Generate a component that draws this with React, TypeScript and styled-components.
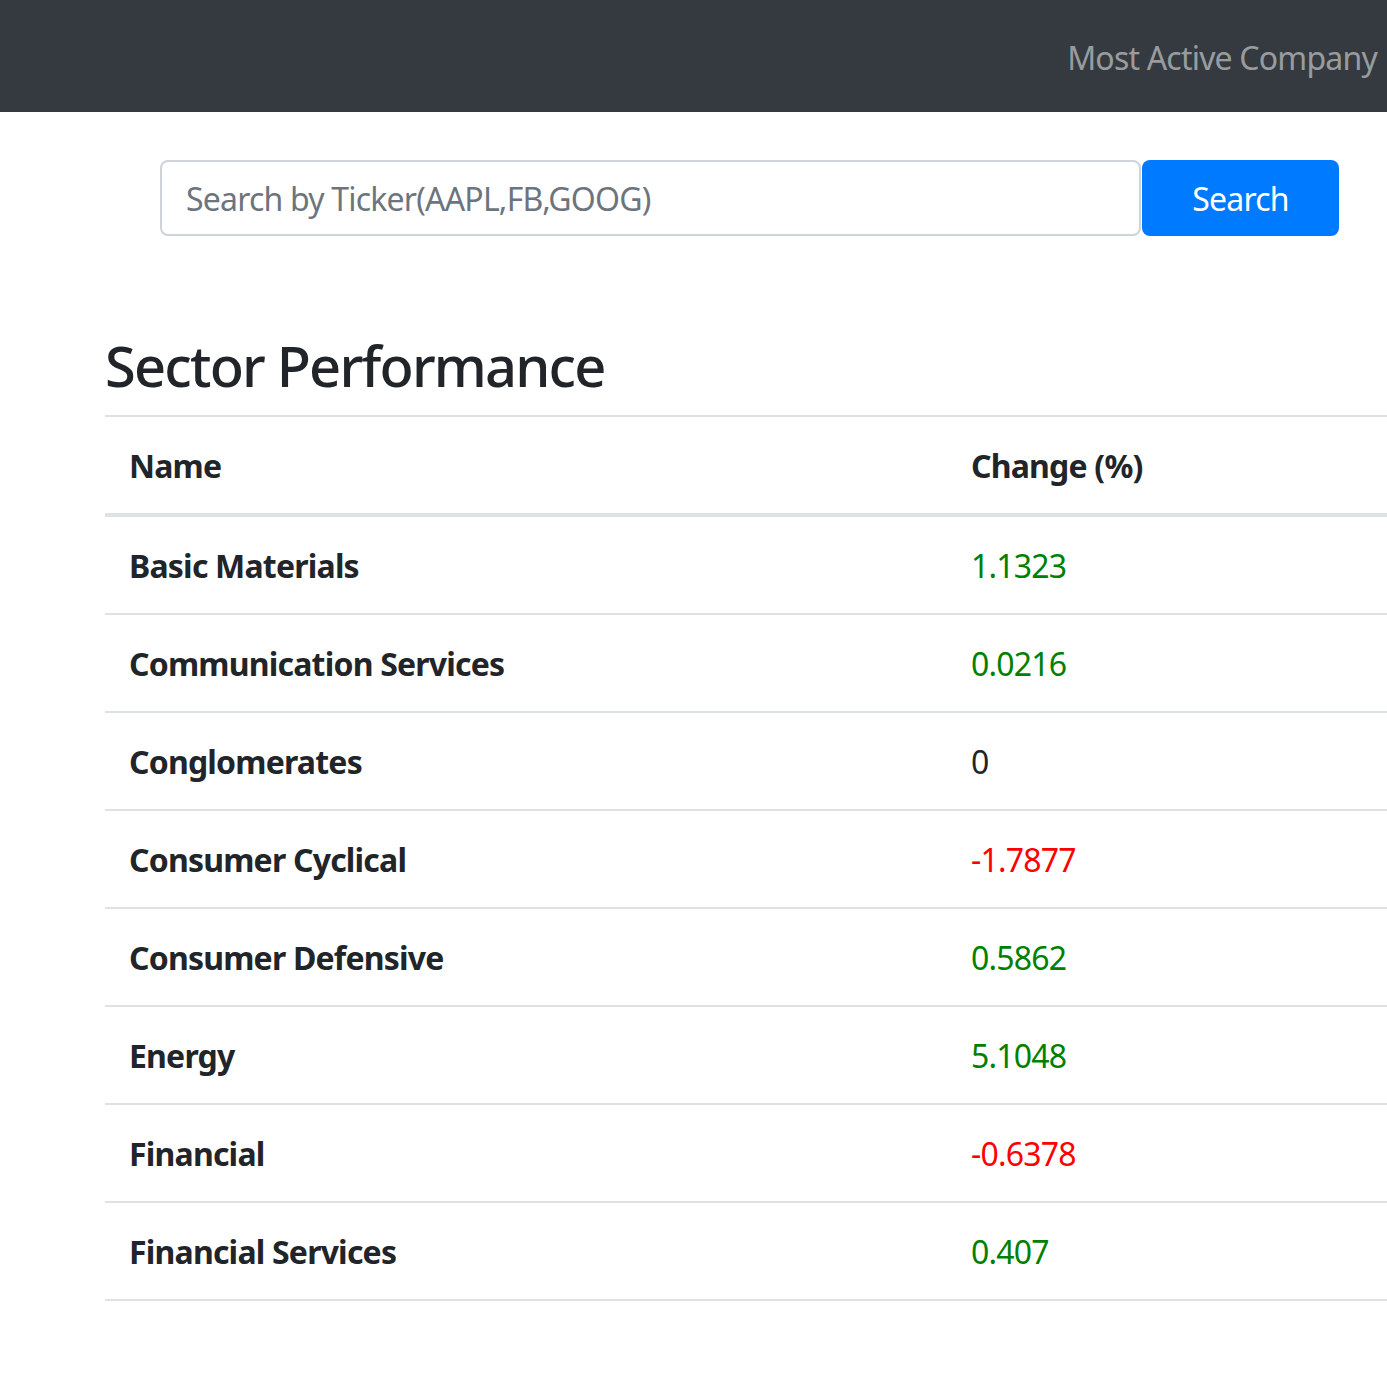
import React from 'react';
import styled, { createGlobalStyle } from 'styled-components';

interface Sector {
  name: string;
  change: number;
}

const sectors: Sector[] = [
  { name: 'Basic Materials', change: 1.1323 },
  { name: 'Communication Services', change: 0.0216 },
  { name: 'Conglomerates', change: 0 },
  { name: 'Consumer Cyclical', change: -1.7877 },
  { name: 'Consumer Defensive', change: 0.5862 },
  { name: 'Energy', change: 5.1048 },
  { name: 'Financial', change: -0.6378 },
  { name: 'Financial Services', change: 0.407 },
];

const GlobalStyle = createGlobalStyle`
  html, body {
    margin: 0;
    padding: 0;
    overflow-x: hidden;
  }
  body {
    font-family: 'Noto Sans', 'Open Sans', sans-serif;
    font-size: 32px;
    line-height: 1.5;
    letter-spacing: -0.8px;
    color: #212529;
    background: #fff;
  }
  * { box-sizing: border-box; }
`;

const Navbar = styled.nav`
  height: 112px;
  background-color: #343a40;
  display: flex;
  align-items: center;
  justify-content: flex-end;
  padding: 4px 10px 0 0;
`;

const NavLink = styled.a`
  color: rgba(255, 255, 255, 0.5);
  font-size: 32px;
  text-decoration: none;
`;

const SearchForm = styled.form`
  display: flex;
  margin: 48px 0 0 160px;
  width: 1179px;
`;

const SearchInput = styled.input`
  flex: 1;
  height: 76px;
  padding: 12px 24px;
  font-family: inherit;
  font-size: 32px;
  letter-spacing: -0.8px;
  color: #495057;
  border: 2px solid #ced4da;
  border-radius: 8px;
  outline: none;

  &::placeholder {
    color: #6c757d;
  }
`;

const SearchButton = styled.button`
  width: 197px;
  height: 76px;
  margin-left: 1px;
  font-family: inherit;
  font-size: 32px;
  letter-spacing: -0.8px;
  color: #fff;
  background-color: #007bff;
  border: none;
  border-radius: 8px;
  cursor: pointer;
`;

const Section = styled.section`
  margin: 96px 0 0 105px;
`;

const Heading = styled.h3`
  margin: 0 0 16px;
  font-size: 56px;
  font-weight: 500;
  line-height: 1.2;
  letter-spacing: -1.8px;
`;

const Table = styled.table`
  width: 100%;
  border-collapse: collapse;
`;

const HeadCell = styled.th<{ $w?: string }>`
  text-align: left;
  font-weight: 700;
  padding: 25px 24px 23px;
  border-top: 2px solid #dee2e6;
  border-bottom: 4px solid #dee2e6;
  width: ${(p) => p.$w || 'auto'};
`;

const NameCell = styled.td`
  font-weight: 700;
  padding: 25px 24px 23px;
  border-top: 2px solid #dee2e6;
  border-bottom: 2px solid #dee2e6;
`;

const ChangeCell = styled.td<{ $change: number }>`
  padding: 25px 24px 23px;
  border-top: 2px solid #dee2e6;
  border-bottom: 2px solid #dee2e6;
  color: ${(p) => (p.$change > 0 ? 'green' : p.$change < 0 ? 'red' : '#212529')};
`;

function App() {
  return (
    <>
      <GlobalStyle />
      <Navbar>
        <NavLink href="#">Most Active Company</NavLink>
      </Navbar>
      <SearchForm onSubmit={(e) => e.preventDefault()}>
        <SearchInput type="text" placeholder="Search by Ticker(AAPL,FB,GOOG)" />
        <SearchButton type="submit">Search</SearchButton>
      </SearchForm>
      <Section>
        <Heading>Sector Performance</Heading>
        <Table>
          <thead>
            <tr>
              <HeadCell $w="842px">Name</HeadCell>
              <HeadCell>Change (%)</HeadCell>
            </tr>
          </thead>
          <tbody>
            {sectors.map((s) => (
              <tr key={s.name}>
                <NameCell>{s.name}</NameCell>
                <ChangeCell $change={s.change}>{s.change}</ChangeCell>
              </tr>
            ))}
          </tbody>
        </Table>
      </Section>
    </>
  );
}

export default App;
